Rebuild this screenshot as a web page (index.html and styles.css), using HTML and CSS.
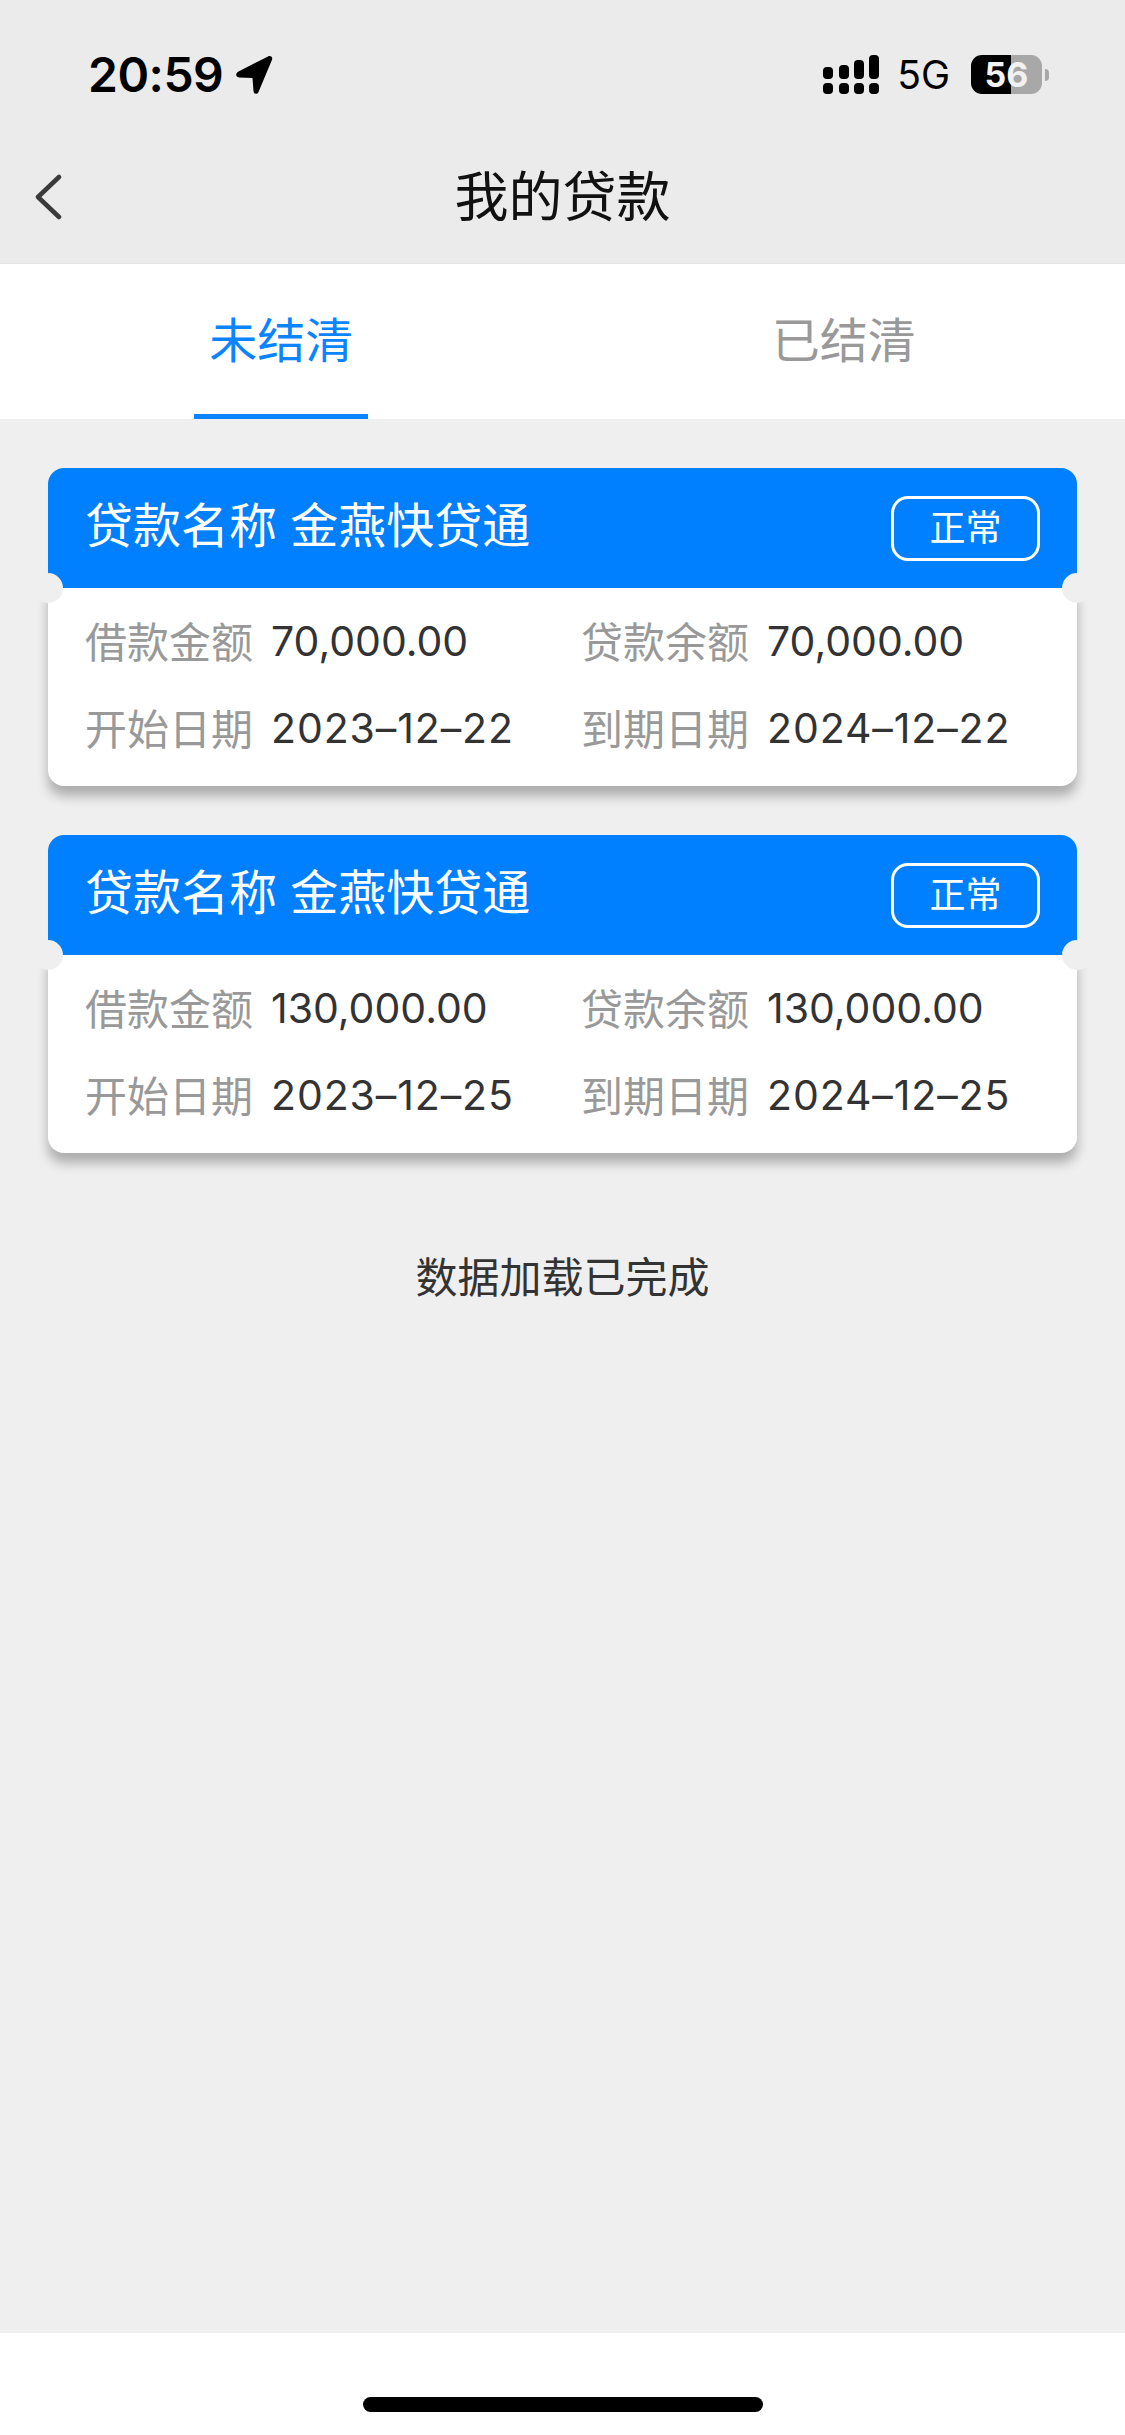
FILE: index.html
```html
<!DOCTYPE html>
<html lang="zh-CN">
<head>
<meta charset="utf-8">
<title>我的贷款</title>
<link rel="stylesheet" href="styles.css">
</head>
<body>
<div class="screen">
  <header class="topbar">
    <div class="status">
      <div class="status-left">
        <span class="time">20:59</span>
        <svg class="arrow" width="38" height="40" viewBox="0 0 38 40"><path d="M3.5 16.500 33 1.500C35.800.2 38 2.300 37 4.800L23.500 37C22.300 39.800 18.800 39.300 18.500 36.300L17.500 23 4 22.500C.5 22.300 .3 18.200 3.500 16.500Z" fill="#000"/></svg>
      </div>
      <div class="status-right">
        <svg class="signal" width="56" height="39" viewBox="0 0 56 39">
          <rect x="0" y="12" width="10" height="12" rx="4"/><rect x="16" y="10" width="10" height="14" rx="4"/><rect x="31" y="5" width="10" height="19" rx="4"/><rect x="46" y="0" width="10" height="24" rx="4"/>
          <rect x="0" y="28" width="10" height="11" rx="4"/><rect x="16" y="28" width="10" height="11" rx="4"/><rect x="31" y="28" width="10" height="11" rx="4"/><rect x="46" y="28" width="10" height="11" rx="4"/>
        </svg>
        <span class="net">5G</span>
        <div class="battery"><div class="battery-body"><span class="battery-level">56</span></div><i class="battery-nub"></i></div>
      </div>
    </div>
    <nav class="nav">
      <svg class="back" width="30" height="46" viewBox="0 0 30 46"><path d="M26 3 5 23l21 20" fill="none" stroke="#3a3a3a" stroke-width="4.500" stroke-linecap="round" stroke-linejoin="round"/></svg>
      <h1 class="nav-title">我的贷款</h1>
      <span></span>
    </nav>
  </header>

  <div class="tabs">
    <div class="tab tab-active"><span class="tab-label">未结清</span></div>
    <div class="tab"><span class="tab-label">已结清</span></div>
  </div>

  <main class="content">
    <section class="card">
      <div class="card-head">
        <span class="card-name">贷款名称 金燕快贷通</span>
        <span class="badge">正常</span>
      </div>
      <i class="notch notch-l"></i><i class="notch notch-r"></i>
      <div class="card-body">
        <div class="field"><span class="label">借款金额</span><span class="value">70,000.00</span></div>
        <div class="field"><span class="label">贷款余额</span><span class="value">70,000.00</span></div>
        <div class="field"><span class="label">开始日期</span><span class="value value-date">2023–12–22</span></div>
        <div class="field"><span class="label">到期日期</span><span class="value value-date">2024–12–22</span></div>
      </div>
    </section>
    <section class="card">
      <div class="card-head">
        <span class="card-name">贷款名称 金燕快贷通</span>
        <span class="badge">正常</span>
      </div>
      <i class="notch notch-l"></i><i class="notch notch-r"></i>
      <div class="card-body">
        <div class="field"><span class="label">借款金额</span><span class="value">130,000.00</span></div>
        <div class="field"><span class="label">贷款余额</span><span class="value">130,000.00</span></div>
        <div class="field"><span class="label">开始日期</span><span class="value value-date">2023–12–25</span></div>
        <div class="field"><span class="label">到期日期</span><span class="value value-date">2024–12–25</span></div>
      </div>
    </section>
    <p class="done">数据加载已完成</p>
  </main>

  <footer class="home"><div class="home-bar"></div></footer>
</div>
</body>
</html>
```
FILE: styles.css
```css
* { box-sizing: border-box; }
html, body { margin: 0; padding: 0; }
body { font-family: "Liberation Sans", "Noto Sans CJK SC", sans-serif; background: #efefef; }
.screen { width: 1125px; height: 2435px; display: flex; flex-direction: column; overflow: hidden; }

.topbar { background: #ebebeb; border-bottom: 1px solid #e3e3e3; height: 264px; display: flex; flex-direction: column; }
.status { height: 131px; display: flex; justify-content: space-between; padding: 55px 76px 0 88px; align-items: flex-start; }
.status-left { display: flex; align-items: center; height: 39px; gap: 12px; }
.time { font-family: Inter, sans-serif; font-weight: 600; font-size: 48px; line-height: 39px; color: #000; letter-spacing: -.5px; }
.status-right { display: flex; align-items: center; height: 39px; }
.signal { fill: #000; display: block; }
.net { font-family: Inter, sans-serif; font-size: 39px; line-height: 39px; margin-left: 18px; color: #000; font-weight: 400; }
.battery { display: flex; align-items: center; margin-left: 21px; }
.battery-body { width: 71px; height: 39px; border-radius: 11px; background: linear-gradient(90deg, #000 0, #000 40px, #a8a8a8 40px, #a8a8a8 100%); display: flex; align-items: center; justify-content: center; }
.battery-level { font-family: Inter, sans-serif; font-weight: 700; font-size: 34px; line-height: 39px; color: #f2f2f2; }
.battery-nub { width: 4px; height: 12px; margin-left: 3px; background: #a8a8a8; border-radius: 0 6px 6px 0; }

.nav { flex: 1; display: grid; grid-template-columns: 1fr auto 1fr; align-items: center; }
.back { display: block; margin-left: 33px; }
.nav-title { margin: 0; font-size: 54px; font-weight: 400; line-height: 70px; color: #111; padding-top: 2px; }

.tabs { display: flex; height: 155px; background: #fff; }
.tab { flex: 1; display: flex; justify-content: center; }
.tab-label { width: 174px; display: flex; align-items: center; justify-content: center; font-size: 48px; color: #999; padding-bottom: 4px; border-bottom: 5px solid transparent; }
.tab-active .tab-label { color: #0a84ff; border-bottom-color: #0a84ff; }

.content { flex: 1; padding: 49px 48px 0; display: flex; flex-direction: column; gap: 49px; }
.card { position: relative; border-radius: 16px; }
.card-head { height: 120px; background: #0080ff; border-radius: 16px 16px 0 0; display: flex; align-items: center; justify-content: space-between; padding: 0 37px; position: relative; }
.card-name { font-size: 48px; color: #fff; line-height: 60px; padding-bottom: 2px; }
.badge { width: 149px; height: 65px; border: 3px solid #fff; border-radius: 17px; font-size: 36px; line-height: 59px; color: #fff; text-align: center; }
.card-body { height: 198px; background: #fff; border-radius: 0 0 16px 16px; padding: 9px 37px 0; display: grid; grid-template-columns: 1fr 1fr; column-gap: 37px; grid-auto-rows: 87px; box-shadow: 0 10px 12px rgba(0,0,0,.28); }
.notch { position: absolute; top: 105px; width: 30px; height: 30px; border-radius: 50%; background: #efefef; }
.notch-l { left: -15px; }
.notch-r { right: -15px; }
.field { display: flex; align-items: center; }
.label { width: 186px; font-size: 42px; color: #999; flex: none; padding-bottom: 2px; }
.value { font-family: Inter, "Liberation Sans", sans-serif; font-size: 41px; color: #333; }
.value-date { letter-spacing: .9px; }
.done { margin: 47px 0 0; font-size: 42px; line-height: 60px; color: #333; text-align: center; }

.home { height: 102px; background: #fff; padding-top: 64px; display: flex; justify-content: center; align-items: flex-start; }
.home-bar { width: 400px; height: 15px; border-radius: 8px; background: #000; }
```
